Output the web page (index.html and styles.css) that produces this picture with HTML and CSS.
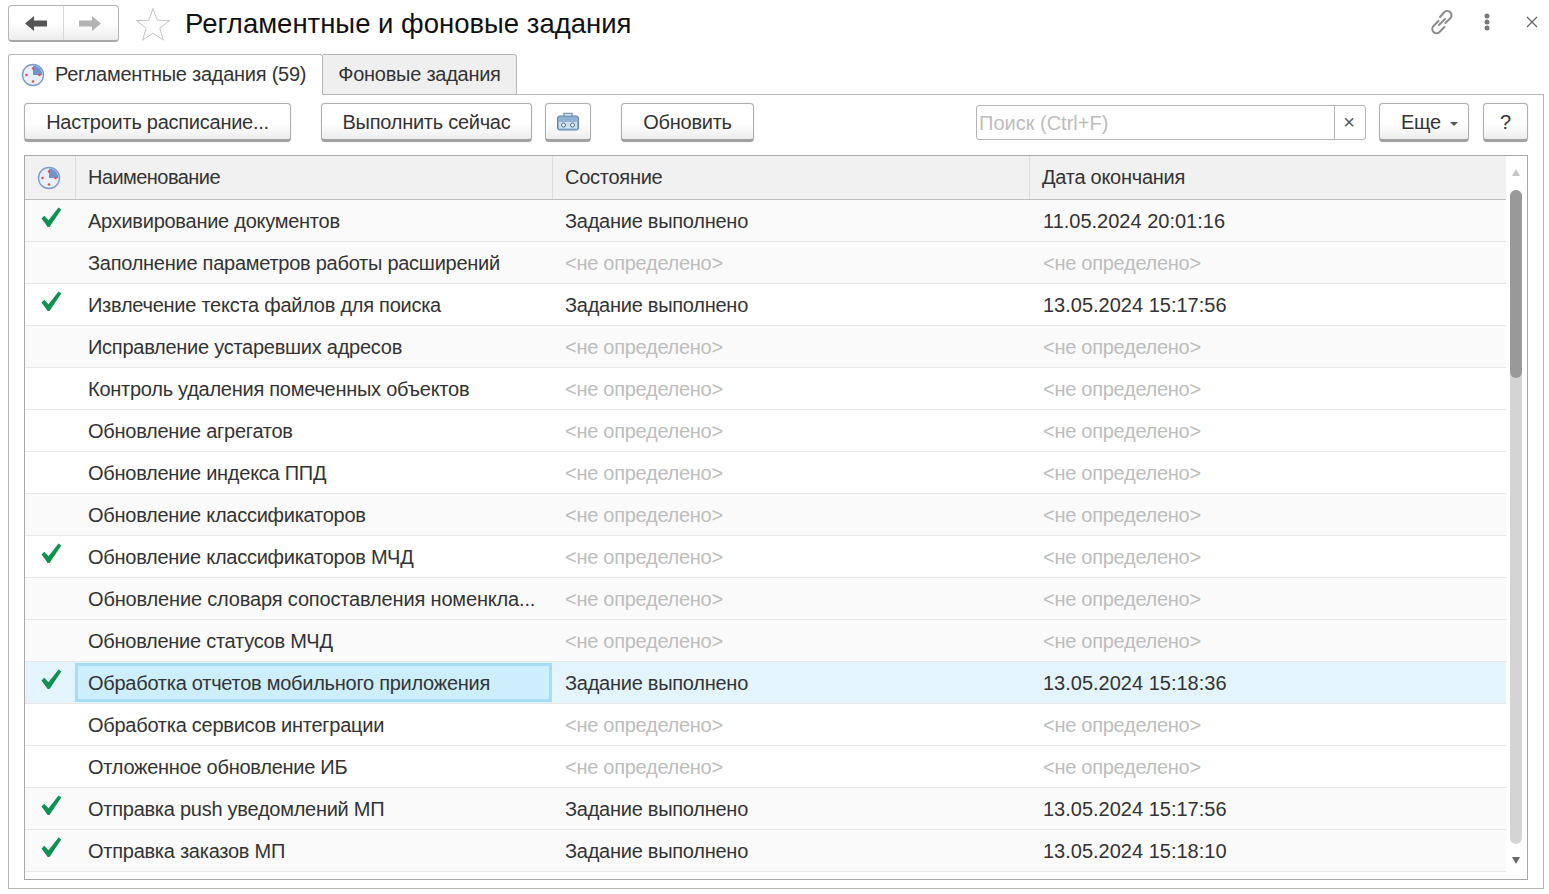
FILE: index.html
```html
<!DOCTYPE html>
<html lang="ru">
<head>
    <meta charset="UTF-8">
    <title>Регламентные и фоновые задания</title>
    <link rel="stylesheet" href="styles.css">
</head>
<body>
<svg class="defs" width="0" height="0">
    <symbol id="clock" viewBox="0 0 24 24">
        <circle cx="12" cy="12" r="10.5" fill="#e9eff8" stroke="#7f9bc9" stroke-width="1.4"/>
        <path d="M12 12V2.500A9.500 9.500 0 0 1 21.500 12z" fill="#6f93cc"/>
        <circle cx="12" cy="5.500" r="1.300" fill="#d9534f"/>
        <circle cx="18.500" cy="12" r="1.300" fill="#d9534f"/>
        <circle cx="12" cy="18.500" r="1.300" fill="#d9534f"/>
        <circle cx="5.500" cy="12" r="1.300" fill="#d9534f"/>
    </symbol>
    <symbol id="check" viewBox="0 0 22 22">
        <path d="M1.500 12.500l2.800-2.800 4.200 4.600L18.500 1.500l2.800 2L9.500 21h-1.800z" fill="#0f9150"/>
    </symbol>
</svg>

<header class="top">
    <div class="nav-group">
        <button class="nav-btn">
            <svg width="22" height="15" viewBox="0 0 22 15"><path d="M0 7.500L9 0v4.500h13v6H9V15z" fill="#555"/></svg>
        </button>
        <button class="nav-btn">
            <svg class="nav-next" width="22" height="15" viewBox="0 0 22 15"><path d="M22 7.500L13 0v4.500H0v6h13V15z" fill="#b3b3b3"/></svg>
        </button>
    </div>
    <svg class="star" width="36" height="34" viewBox="0 0 36 34"><path d="M18 1.500l4.200 11.700 12.400.4-9.750 7.600 3.450 12L18 26.200 7.700 33.200l3.450-12L1.400 13.600l12.400-.4z" fill="#fff" stroke="#c4c4c4"/></svg>
    <h1 class="title">Регламентные и фоновые задания</h1>
    <div class="win-actions">
        <svg class="link" width="26" height="26" viewBox="0 0 26 26" fill="none" stroke="#8a8a8a" stroke-width="2" stroke-linecap="round"><path d="M10 16l6-6"/><path d="M9.500 12l-5 5a4.200 4.200 0 0 0 6 6l5-5"/><path d="M11 8l4-4.500a4.200 4.200 0 0 1 6.500 5.500l-5 5"/></svg>
        <svg class="dots" width="8" height="18" viewBox="0 0 8 18" fill="#777"><circle cx="4" cy="3" r="2.500"/><circle cx="4" cy="9" r="2.500"/><circle cx="4" cy="15" r="2.500"/></svg>
        <svg class="close" width="12" height="12" viewBox="0 0 12 12" stroke="#666" stroke-width="1.300"><path d="M1 1l10 10M11 1L1 11"/></svg>
    </div>
</header>

<div class="tabs">
    <div class="tab tab-active"><svg class="tab-icon" width="24" height="24"><use href="#clock"/></svg>Регламентные задания (59)</div>
    <div class="tab">Фоновые задания</div>
</div>

<main class="panel">
    <div class="toolbar">
        <button class="btn btn-setup">Настроить расписание...</button>
        <button class="btn btn-run">Выполнить сейчас</button>
        <button class="btn btn-icon">
            <svg width="24" height="20" viewBox="0 0 24 20"><path d="M8 4V1.500h8V4" fill="none" stroke="#7d9ab8" stroke-width="1.500"/><rect x="1.500" y="4" width="21" height="14" rx="2" fill="#8fb1d1" stroke="#5f86ab"/><rect x="3" y="10" width="18" height="6.500" fill="#cfe0ef"/><circle cx="7.500" cy="13" r="2" fill="#fff" stroke="#46688a"/><circle cx="16.500" cy="13" r="2" fill="#fff" stroke="#46688a"/></svg>
        </button>
        <button class="btn btn-refresh">Обновить</button>
        <div class="search">
            <span class="search-text">Поиск (Ctrl+F)</span>
            <span class="search-clear">×</span>
        </div>
        <button class="btn btn-more">Еще<span class="caret"></span></button>
        <button class="btn btn-help">?</button>
    </div>

    <div class="grid">
        <div class="grid-body">
            <div class="row row-head">
                <div class="cell cell-icon"><svg width="24" height="24"><use href="#clock"/></svg></div>
                <div class="cell cell-name">Наименование</div>
                <div class="cell">Состояние</div>
                <div class="cell">Дата окончания</div>
            </div>
            <div class="row row-alt">
                <div class="cell cell-icon"><svg class="check" width="22" height="22"><use href="#check"/></svg></div>
                <div class="cell">Архивирование документов</div>
                <div class="cell">Задание выполнено</div>
                <div class="cell cell-date">11.05.2024 20:01:16</div>
            </div>
            <div class="row row-alt">
                <div class="cell cell-icon"></div>
                <div class="cell">Заполнение параметров работы расширений</div>
                <div class="cell muted">&lt;не определено&gt;</div>
                <div class="cell cell-date muted">&lt;не определено&gt;</div>
            </div>
            <div class="row">
                <div class="cell cell-icon"><svg class="check" width="22" height="22"><use href="#check"/></svg></div>
                <div class="cell">Извлечение текста файлов для поиска</div>
                <div class="cell">Задание выполнено</div>
                <div class="cell cell-date">13.05.2024 15:17:56</div>
            </div>
            <div class="row row-alt">
                <div class="cell cell-icon"></div>
                <div class="cell">Исправление устаревших адресов</div>
                <div class="cell muted">&lt;не определено&gt;</div>
                <div class="cell cell-date muted">&lt;не определено&gt;</div>
            </div>
            <div class="row">
                <div class="cell cell-icon"></div>
                <div class="cell">Контроль удаления помеченных объектов</div>
                <div class="cell muted">&lt;не определено&gt;</div>
                <div class="cell cell-date muted">&lt;не определено&gt;</div>
            </div>
            <div class="row">
                <div class="cell cell-icon"></div>
                <div class="cell">Обновление агрегатов</div>
                <div class="cell muted">&lt;не определено&gt;</div>
                <div class="cell cell-date muted">&lt;не определено&gt;</div>
            </div>
            <div class="row">
                <div class="cell cell-icon"></div>
                <div class="cell">Обновление индекса ППД</div>
                <div class="cell muted">&lt;не определено&gt;</div>
                <div class="cell cell-date muted">&lt;не определено&gt;</div>
            </div>
            <div class="row row-alt">
                <div class="cell cell-icon"></div>
                <div class="cell">Обновление классификаторов</div>
                <div class="cell muted">&lt;не определено&gt;</div>
                <div class="cell cell-date muted">&lt;не определено&gt;</div>
            </div>
            <div class="row">
                <div class="cell cell-icon"><svg class="check" width="22" height="22"><use href="#check"/></svg></div>
                <div class="cell">Обновление классификаторов МЧД</div>
                <div class="cell muted">&lt;не определено&gt;</div>
                <div class="cell cell-date muted">&lt;не определено&gt;</div>
            </div>
            <div class="row row-alt">
                <div class="cell cell-icon"></div>
                <div class="cell cell-long">Обновление словаря сопоставления номенкла...</div>
                <div class="cell muted">&lt;не определено&gt;</div>
                <div class="cell cell-date muted">&lt;не определено&gt;</div>
            </div>
            <div class="row row-alt">
                <div class="cell cell-icon"></div>
                <div class="cell">Обновление статусов МЧД</div>
                <div class="cell muted">&lt;не определено&gt;</div>
                <div class="cell cell-date muted">&lt;не определено&gt;</div>
            </div>
            <div class="row row-selected">
                <div class="cell cell-icon"><svg class="check" width="22" height="22"><use href="#check"/></svg></div>
                <div class="cell cell-focus">Обработка отчетов мобильного приложения</div>
                <div class="cell">Задание выполнено</div>
                <div class="cell cell-date">13.05.2024 15:18:36</div>
            </div>
            <div class="row">
                <div class="cell cell-icon"></div>
                <div class="cell">Обработка сервисов интеграции</div>
                <div class="cell muted">&lt;не определено&gt;</div>
                <div class="cell cell-date muted">&lt;не определено&gt;</div>
            </div>
            <div class="row">
                <div class="cell cell-icon"></div>
                <div class="cell">Отложенное обновление ИБ</div>
                <div class="cell muted">&lt;не определено&gt;</div>
                <div class="cell cell-date muted">&lt;не определено&gt;</div>
            </div>
            <div class="row row-alt">
                <div class="cell cell-icon"><svg class="check" width="22" height="22"><use href="#check"/></svg></div>
                <div class="cell">Отправка push уведомлений МП</div>
                <div class="cell">Задание выполнено</div>
                <div class="cell cell-date">13.05.2024 15:17:56</div>
            </div>
            <div class="row row-alt">
                <div class="cell cell-icon"><svg class="check" width="22" height="22"><use href="#check"/></svg></div>
                <div class="cell">Отправка заказов МП</div>
                <div class="cell">Задание выполнено</div>
                <div class="cell cell-date">13.05.2024 15:18:10</div>
            </div>
        </div>
        <div class="scrollbar">
            <span class="arrow arrow-up"></span>
            <div class="scroll-track"><div class="scroll-thumb"></div></div>
            <span class="arrow arrow-down"></span>
        </div>
    </div>
</main>
</body>
</html>
```

FILE: styles.css
```css
* {
    box-sizing: border-box;
}
html, body {
    height: 100%;
}
body {
    margin: 0;
    padding: 0 5px 5px 8px;
    background-color: #fff;
    font-family: "Liberation Sans", Arial, sans-serif;
    font-size: 20px;
    letter-spacing: -0.26px;
    color: #333;
    overflow: hidden;
    display: flex;
    flex-direction: column;
}
.defs {
    display: block;
    height: 0;
}
button {
    font: inherit;
    letter-spacing: inherit;
    color: inherit;
    cursor: pointer;
}

/* window header */
.top {
    height: 54px;
    flex: none;
    display: flex;
    align-items: flex-start;
}
.nav-group {
    display: flex;
    width: 111px;
    height: 37px;
    margin-top: 5px;
    border: 1px solid #b5b5b5;
    border-bottom: 2px solid #a8a8a8;
    border-radius: 4px;
    background: linear-gradient(#fff, #fff 50%, #ececec);
}
.nav-btn {
    flex: 1;
    border: none;
    background: none;
    padding: 0;
    display: flex;
    align-items: center;
    justify-content: center;
}
.nav-btn + .nav-btn {
    border-left: 1px solid #d6d6d6;
}
.nav-next {
    margin-right: 2px;
}
.star {
    margin: 7px 0 0 16px;
}
.title {
    margin: 7px 0 0 14px;
    font-size: 27.5px;
    font-weight: normal;
    letter-spacing: 0;
    line-height: 34px;
    color: #111;
}
.win-actions {
    margin-left: auto;
    display: flex;
    align-items: center;
    height: 44px;
}
.link {
    margin-bottom: 1px;
}
.dots {
    margin-left: 28px;
}
.close {
    margin: 0 6px 0 35px;
}

/* tabs */
.tabs {
    display: flex;
    height: 40px;
    flex: none;
    position: relative;
    z-index: 1;
}
.tab {
    height: 41px;
    width: 194px;
    display: flex;
    align-items: center;
    justify-content: center;
    background-color: #efefef;
    border: 1px solid #b5b5b5;
    border-left: none;
    border-radius: 0 3px 0 0;
    padding-bottom: 1px;
}
.tab-active {
    width: 315px;
    background-color: #fff;
    border-left: 1px solid #b5b5b5;
    border-bottom: none;
    border-radius: 3px 3px 0 0;
    justify-content: flex-start;
    padding-left: 12px;
}
.tab-icon {
    margin-right: 10px;
}

/* main panel */
.panel {
    flex: 1;
    min-height: 0;
    border: 1px solid #b5b5b5;
    padding: 8px 15px 8px 15px;
    display: flex;
    flex-direction: column;
}
.toolbar {
    display: flex;
    align-items: flex-start;
    height: 52px;
    flex: none;
}
.btn {
    height: 39px;
    padding: 1px 0 0;
    border: 1px solid #aeaeae;
    border-bottom: 3px solid #a0a0a0;
    border-radius: 4px;
    box-shadow: 0 0 1px #bbb;
    background: linear-gradient(#fff, #fff 55%, #ededed);
    display: flex;
    align-items: center;
    justify-content: center;
}
.btn-setup {
    width: 267px;
}
.btn-run {
    width: 211px;
    margin-left: 30px;
}
.btn-icon {
    width: 46px;
    margin-left: 13px;
}
.btn-refresh {
    width: 133px;
    margin-left: 30px;
}
.search {
    width: 390px;
    height: 35px;
    margin: 2px 0 0 222px;
    border: 1px solid #b5b5b5;
    border-radius: 3px;
    display: flex;
    align-items: center;
    letter-spacing: 0;
    color: #bdbdbd;
}
.search-text {
    flex: 1;
    padding: 1px 0 0 2px;
}
.search-clear {
    width: 31px;
    height: 100%;
    border-left: 1px solid #b5b5b5;
    color: #555;
    padding-right: 2px;
    display: flex;
    align-items: center;
    justify-content: center;
}
.btn-more {
    width: 90px;
    margin-left: 13px;
    padding-left: 21px;
    justify-content: flex-start;
}
.caret {
    margin-left: 9px;
    margin-top: 3px;
    border: 4px solid transparent;
    border-top-color: #555;
    border-bottom: none;
}
.btn-help {
    width: 45px;
    margin-left: 14px;
}

/* list */
.grid {
    flex: 1;
    min-height: 0;
    border: 1px solid #a8a8a8;
    display: flex;
    overflow: hidden;
}
.grid-body {
    flex: 1;
    min-width: 0;
}
.row {
    display: grid;
    grid-template-columns: 50px 477px 477px 1fr;
    height: 42px;
    border-bottom: 1px solid #e6e6e6;
    background-color: #fff;
}
.row-alt {
    background-color: #fafafa;
}
.row-head {
    height: 44px;
    background-color: #f1f1f1;
    border-bottom: 1px solid #bdbdbd;
}
.row-selected {
    background-color: #e3f4fc;
}
.cell {
    display: flex;
    align-items: center;
    padding: 1px 12px 0;
    white-space: nowrap;
    overflow: hidden;
    border-left: 1px solid transparent;
}
.row-head .cell {
    padding-top: 0;
    border-left-color: #dcdcdc;
}
.row-head .cell-icon {
    border-left: none;
}
.row-head .cell-name {
    letter-spacing: -0.55px;
}
.cell-long {
    letter-spacing: -0.16px;
}
.row .cell-icon {
    padding: 0 0 0 12px;
    border-left: none;
}
.row .check {
    margin-bottom: 7px;
    margin-left: 3px;
}
.cell-date {
    padding-left: 13px;
    letter-spacing: 0;
}
.cell-focus {
    background-color: #cdeefd;
    border: 3px solid #a7dcf5;
    margin: 1px 0;
    padding: 1px 0 0 10px;
}
.muted {
    letter-spacing: -0.27px;
    color: #bdbdbd;
}
.scrollbar {
    width: 21px;
    flex: none;
    display: flex;
    flex-direction: column;
    align-items: center;
    padding-right: 1px;
    background-color: #fff;
}
.arrow {
    flex: none;
    width: 0;
    border: 4px solid transparent;
}
.arrow-up {
    border-bottom: 7px solid #c4c4c4;
    border-top: none;
    margin-top: 13px;
}
.arrow-down {
    border-top: 7px solid #666;
    border-bottom: none;
    margin-bottom: 15px;
}
.scroll-track {
    flex: 1;
    width: 12px;
    margin: 14px 0 13px;
    border-radius: 6px;
    background-color: #d4d4d4;
}
.scroll-thumb {
    height: 188px;
    border-radius: 6px;
    background-color: #999;
}
```
